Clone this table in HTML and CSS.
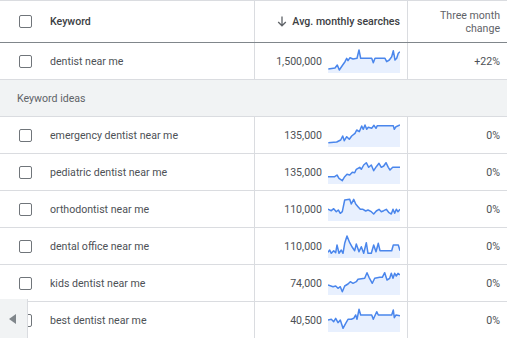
FILE: index.html
```html
<!DOCTYPE html>
<html>
<head>
<meta charset="utf-8">
<link rel="stylesheet" href="styles.css">
</head>
<body>
<div class="table">
  <div class="row head">
    <div class="cell kw"><span class="cb"></span><span class="hd">Keyword</span></div>
    <div class="cell avg"><span class="arrow">
      <svg width="10" height="11" viewBox="0 0 10 11"><path d="M5 0.5V9.5M1.2 6L5 9.8L8.8 6" fill="none" stroke="#5f6368" stroke-width="1.3"/></svg></span><span class="hd">Avg. monthly searches</span></div>
    <div class="cell chg"><span class="hd2">Three month<br>change</span></div>
  </div>
  <div class="row">
    <div class="cell kw"><span class="cb"></span><span>dentist near me</span></div>
    <div class="cell avg"><span class="num">1,500,000</span>
      <svg class="spark" viewBox="0 0 72 24"><path class="area" d="M0.3 20L7 19L9.3 16L11.3 21L14.7 16L17 12.7L18.7 9.3L20 11.7L22 8.7L25 10L29 9.3L31 1L32.7 9.3L43.7 9.3L45.3 13.7L47 9.3L57 9.3L58.7 12.7L61.3 11L63.7 7.7L65.3 1.7L67 11L68.7 9.3L70.3 4.3L72 2.7L72 24L0 24Z"/><path class="line" d="M0.3 20L7 19L9.3 16L11.3 21L14.7 16L17 12.7L18.7 9.3L20 11.7L22 8.7L25 10L29 9.3L31 1L32.7 9.3L43.7 9.3L45.3 13.7L47 9.3L57 9.3L58.7 12.7L61.3 11L63.7 7.7L65.3 1.7L67 11L68.7 9.3L70.3 4.3L72 2.7"/></svg>
    </div>
    <div class="cell chg">+22%</div>
  </div>
  <div class="band">Keyword ideas</div>
  <div class="row">
    <div class="cell kw"><span class="cb"></span><span>emergency dentist near me</span></div>
    <div class="cell avg"><span class="num">135,000</span>
      <svg class="spark" viewBox="0 0 72 24"><path class="area" d="M0.3 19.7L8.7 19L12.7 17L14.7 13L16.3 17.7L18.7 13.7L21.3 16.3L23.7 13L27 10.3L28.7 7L31.3 8.7L33.7 3L35.3 6.3L37 2L38.7 6.3L40.3 4.3L43.7 5.3L46 2.3L48 5.3L49.3 2.7L65.3 2.7L66.3 6.3L68 3.7L72 2L72 24L0 24Z"/><path class="line" d="M0.3 19.7L8.7 19L12.7 17L14.7 13L16.3 17.7L18.7 13.7L21.3 16.3L23.7 13L27 10.3L28.7 7L31.3 8.7L33.7 3L35.3 6.3L37 2L38.7 6.3L40.3 4.3L43.7 5.3L46 2.3L48 5.3L49.3 2.7L65.3 2.7L66.3 6.3L68 3.7L72 2"/></svg>
    </div>
    <div class="cell chg">0%</div>
  </div>
  <div class="row">
    <div class="cell kw"><span class="cb"></span><span>pediatric dentist near me</span></div>
    <div class="cell avg"><span class="num">135,000</span>
      <svg class="spark" viewBox="0 0 72 24"><path class="area" d="M0 16.7L6.7 16.7L9 15L11 18.3L14.3 20.7L16.7 16.7L19 14.3L21.7 15L24.3 12.3L26.7 12.7L28.3 9.3L31.7 7.3L33.3 9.3L35.7 5L38.3 2.7L40.7 7.3L43.3 5L45.7 10.7L48.3 6.7L51 3.3L53.3 7.3L55.7 6L58 2.7L60.3 7.3L62 10L64.7 7.3L72 7.3L72 24L0 24Z"/><path class="line" d="M0 16.7L6.7 16.7L9 15L11 18.3L14.3 20.7L16.7 16.7L19 14.3L21.7 15L24.3 12.3L26.7 12.7L28.3 9.3L31.7 7.3L33.3 9.3L35.7 5L38.3 2.7L40.7 7.3L43.3 5L45.7 10.7L48.3 6.7L51 3.3L53.3 7.3L55.7 6L58 2.7L60.3 7.3L62 10L64.7 7.3L72 7.3"/></svg>
    </div>
    <div class="cell chg">0%</div>
  </div>
  <div class="row">
    <div class="cell kw"><span class="cb"></span><span>orthodontist near me</span></div>
    <div class="cell avg"><span class="num">110,000</span>
      <svg class="spark" viewBox="0 0 72 24"><path class="area" d="M0 12.3L3.3 13.7L5.7 11.7L8.3 14.7L10.3 13L12.3 16.3L14.3 14.7L16.7 3L21.7 2.3L23.3 7L25.7 2.3L27.7 7L30 9.7L32.3 12.3L35 12.3L37.7 14L40 13L43.3 14.7L45.7 17L48.3 14L51 12.3L53.3 14.7L55.7 13.7L58.3 12.3L61 15.7L63.3 17L65 12.3L66.7 16.3L68.3 12.3L70 14.7L72 12.3L72 24L0 24Z"/><path class="line" d="M0 12.3L3.3 13.7L5.7 11.7L8.3 14.7L10.3 13L12.3 16.3L14.3 14.7L16.7 3L21.7 2.3L23.3 7L25.7 2.3L27.7 7L30 9.7L32.3 12.3L35 12.3L37.7 14L40 13L43.3 14.7L45.7 17L48.3 14L51 12.3L53.3 14.7L55.7 13.7L58.3 12.3L61 15.7L63.3 17L65 12.3L66.7 16.3L68.3 12.3L70 14.7L72 12.3"/></svg>
    </div>
    <div class="cell chg">0%</div>
  </div>
  <div class="row">
    <div class="cell kw"><span class="cb"></span><span>dental office near me</span></div>
    <div class="cell avg"><span class="num">110,000</span>
      <svg class="spark" viewBox="0 0 72 24"><path class="area" d="M0 18.3L1.7 16L3.3 19.3L5.7 16.7L7.7 18.7L9 11L11 19.3L13.3 16L15 19.3L16.7 9.3L19 2L21.7 8.7L24.3 13.3L26.7 16.7L28.3 10L31 17.7L33.3 12.7L35.7 19.3L38.3 8.7L40 19.3L43.3 19.3L45.7 11L48 17.7L50.3 9.3L52 16.7L63.7 16.7L65.3 11L70.3 11L72 16.7L72 24L0 24Z"/><path class="line" d="M0 18.3L1.7 16L3.3 19.3L5.7 16.7L7.7 18.7L9 11L11 19.3L13.3 16L15 19.3L16.7 9.3L19 2L21.7 8.7L24.3 13.3L26.7 16.7L28.3 10L31 17.7L33.3 12.7L35.7 19.3L38.3 8.7L40 19.3L43.3 19.3L45.7 11L48 17.7L50.3 9.3L52 16.7L63.7 16.7L65.3 11L70.3 11L72 16.7"/></svg>
    </div>
    <div class="cell chg">0%</div>
  </div>
  <div class="row">
    <div class="cell kw"><span class="cb"></span><span>kids dentist near me</span></div>
    <div class="cell avg"><span class="num">74,000</span>
      <svg class="spark" viewBox="0 0 72 24"><path class="area" d="M0 14L5 15.7L7.7 15L10 17.3L12.3 15.7L14.3 20.7L16.7 15L20 13L22.3 10.7L25 12.3L28.3 10.7L30 8.3L36.7 7.3L39 1.7L41 6.3L44.3 12.3L46.7 7.3L51.7 6.3L54.3 6.3L56.7 1.7L59 9L61.7 7.3L63.3 2.3L65 7.3L66.7 2.3L68.3 5L70 2.3L72 4L72 24L0 24Z"/><path class="line" d="M0 14L5 15.7L7.7 15L10 17.3L12.3 15.7L14.3 20.7L16.7 15L20 13L22.3 10.7L25 12.3L28.3 10.7L30 8.3L36.7 7.3L39 1.7L41 6.3L44.3 12.3L46.7 7.3L51.7 6.3L54.3 6.3L56.7 1.7L59 9L61.7 7.3L63.3 2.3L65 7.3L66.7 2.3L68.3 5L70 2.3L72 4"/></svg>
    </div>
    <div class="cell chg">0%</div>
  </div>
  <div class="row">
    <div class="cell kw"><span class="cb"></span><span>best dentist near me</span></div>
    <div class="cell avg"><span class="num">40,500</span>
      <svg class="spark" viewBox="0 0 72 24"><path class="area" d="M0 12L3.3 11.3L5.7 13.7L7.7 10.3L10 14.7L12.3 12L15 20.3L17.7 15.3L20 11.3L23.3 11.3L25.7 10.3L27.7 7L29 11.3L31 1.3L32.7 7L43.7 7L45.3 11.3L48.7 3.7L50.3 7L63.7 7L65.3 2L66.3 9.7L68 7L72 7.7L72 24L0 24Z"/><path class="line" d="M0 12L3.3 11.3L5.7 13.7L7.7 10.3L10 14.7L12.3 12L15 20.3L17.7 15.3L20 11.3L23.3 11.3L25.7 10.3L27.7 7L29 11.3L31 1.3L32.7 7L43.7 7L45.3 11.3L48.7 3.7L50.3 7L63.7 7L65.3 2L66.3 9.7L68 7L72 7.7"/></svg>
    </div>
    <div class="cell chg">0%</div>
  </div>
  <div class="scroll-btn"><span class="tri"></span></div>
</div>
</body>
</html>
```
FILE: styles.css
```css
html, body {
  margin: 0;
  padding: 0;
  background: #fff;
}
body {
  font-family: Roboto, "Noto Sans", Arial, sans-serif;
  font-size: 10.6px;
  color: #4d5156;
  overflow: hidden;
}
.table {
  position: relative;
  width: 507px;
  height: 338px;
  border-top: 1px solid #dadce0;
  overflow: hidden;
}
.row {
  display: grid;
  grid-template-columns: 255px 153px 1fr;
  height: 37px;
  box-sizing: border-box;
  border-bottom: 1px solid #dadce0;
}
.row.head {
  height: 42px;
  border-bottom: 1px solid #80868b;
}
.cell {
  display: flex;
  align-items: center;
  box-sizing: border-box;
  min-width: 0;
}
.kw {
  border-right: 1px solid #dadce0;
  padding-left: 19px;
}
.avg {
  border-right: 1px solid #dadce0;
  justify-content: flex-end;
  padding-right: 7px;
}
.chg {
  justify-content: flex-end;
  padding-right: 7px;
  text-align: right;
}
.cb {
  width: 13px;
  height: 13px;
  box-sizing: border-box;
  border: 1.5px solid #70757a;
  border-radius: 2px;
  margin-right: 18px;
  flex: none;
}
.hd {
  font-weight: 500;
  color: #3c4043;
}
.hd2 {
  line-height: 13px;
  color: #5f6368;
  padding-top: 1px;
}
.arrow {
  display: flex;
  margin-right: 5px;
}
.num {
  margin-right: 6px;
}
.spark {
  width: 72px;
  height: 24px;
  display: block;
}
.area {
  fill: #e8f0fe;
  stroke: none;
}
.line {
  fill: none;
  stroke: #4a86ec;
  stroke-width: 1.5;
  stroke-linejoin: round;
}
.band {
  height: 37px;
  box-sizing: border-box;
  border-bottom: 1px solid #dadce0;
  background: #f1f3f4;
  padding-left: 17px;
  display: flex;
  align-items: center;
  color: #5f6368;
}
.scroll-btn {
  position: absolute;
  left: 0;
  bottom: 0;
  width: 28px;
  height: 40px;
  box-sizing: border-box;
  background: #f1f3f4;
  border-right: 1px solid #dadce0;
  display: flex;
  align-items: center;
  justify-content: center;
}
.tri {
  width: 0;
  height: 0;
  border-top: 5px solid transparent;
  border-bottom: 5px solid transparent;
  border-right: 7px solid #80868b;
  margin-left: -2px;
}
```
